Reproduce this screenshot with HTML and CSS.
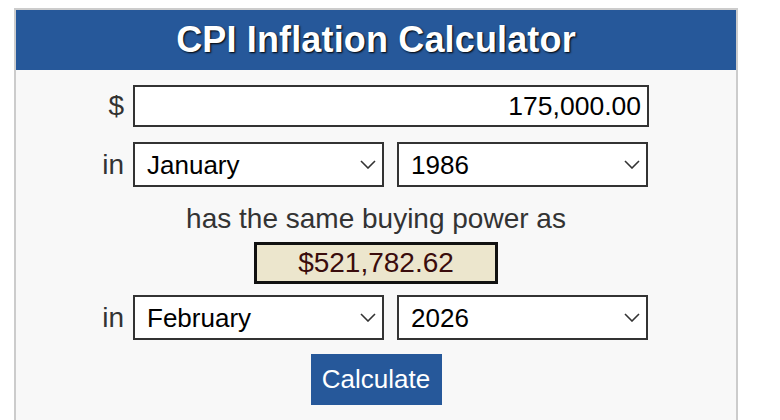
FILE: index.html
```html
<!DOCTYPE html>
<html>
<head>
<meta charset="utf-8">
<link rel="stylesheet" href="styles.css">
</head>
<body>
<div class="calc">
  <div class="header"><h1 class="title">CPI Inflation Calculator</h1></div>
  <div class="form">
    <div class="row row-amount">
      <span class="label">$</span>
      <input class="amount" type="text" value="175,000.00">
    </div>
    <div class="row row-select">
      <span class="label">in</span>
      <div class="pair">
        <div class="sel">
          <select><option>January</option></select>
          <svg class="chev" width="16" height="9" viewBox="0 0 16 9"><path d="M1 1 L8 8 L15 1" fill="none" stroke="#333" stroke-width="1.6"/></svg>
        </div>
        <div class="sel">
          <select><option>1986</option></select>
          <svg class="chev" width="16" height="9" viewBox="0 0 16 9"><path d="M1 1 L8 8 L15 1" fill="none" stroke="#333" stroke-width="1.6"/></svg>
        </div>
      </div>
    </div>
    <div class="same">has the same buying power as</div>
    <div class="result">$521,782.62</div>
    <div class="row row-select row-to">
      <span class="label">in</span>
      <div class="pair">
        <div class="sel">
          <select><option>February</option></select>
          <svg class="chev" width="16" height="9" viewBox="0 0 16 9"><path d="M1 1 L8 8 L15 1" fill="none" stroke="#333" stroke-width="1.6"/></svg>
        </div>
        <div class="sel">
          <select><option>2026</option></select>
          <svg class="chev" width="16" height="9" viewBox="0 0 16 9"><path d="M1 1 L8 8 L15 1" fill="none" stroke="#333" stroke-width="1.6"/></svg>
        </div>
      </div>
    </div>
    <div class="actions"><button class="btn" type="button">Calculate</button></div>
  </div>
</div>
</body>
</html>
```
FILE: styles.css
```css
html, body {
  margin: 0;
  padding: 0;
  background: #fff;
}
body {
  padding: 8px 0 0 14px;
  font-family: "Liberation Sans", Arial, sans-serif;
}
.calc {
  width: 720px;
  border: 2px solid #cccccc;
  border-bottom: none;
  background: #f8f8f8;
  height: 420px;
}
.header {
  background: #26589a;
  height: 60px;
  display: flex;
  align-items: center;
  justify-content: center;
}
.title {
  margin: 0;
  color: #fff;
  font-size: 36px;
  font-weight: bold;
  text-shadow: 1px 1px 2px #000;
  letter-spacing: 0.15px;
}
.form {
  display: flex;
  flex-direction: column;
  align-items: center;
}
.row {
  display: grid;
  grid-template-columns: 24px 516px;
  column-gap: 9px;
  align-items: center;
  margin-left: -3px;
}
.row-amount {
  margin-top: 15px;
}
.row-select {
  margin-top: 15px;
}
.row-to {
  margin-top: 11px;
}
.label {
  text-align: right;
  font-size: 28px;
  color: #333;
}
.amount {
  box-sizing: border-box;
  width: 516px;
  height: 42px;
  border: 2px solid #333;
  background: #fff;
  font-family: "Liberation Sans", Arial, sans-serif;
  font-size: 26.5px;
  color: #000;
  text-align: right;
  padding: 0 6px 0 0;
  margin: 0;
  outline: none;
}
.pair {
  display: flex;
  gap: 13px;
}
.sel {
  position: relative;
  width: 251px;
  height: 45px;
}
.sel select {
  box-sizing: border-box;
  width: 251px;
  height: 45px;
  appearance: none;
  -webkit-appearance: none;
  border: 2px solid #333;
  border-radius: 0;
  background: #fff;
  font-family: "Liberation Sans", Arial, sans-serif;
  font-size: 26px;
  color: #000;
  padding: 0 0 0 12px;
  margin: 0;
}
.chev {
  position: absolute;
  right: 8px;
  top: 18px;
  pointer-events: none;
}
.same {
  margin-top: 16px;
  font-size: 28px;
  color: #333;
  line-height: 32px;
}
.result {
  box-sizing: border-box;
  margin-top: 7px;
  width: 244px;
  height: 42px;
  border: 3px solid #111;
  background: #ece6cd;
  color: #3a0c0c;
  font-size: 28px;
  display: flex;
  align-items: center;
  justify-content: center;
}
.actions {
  margin-top: 14px;
}
.btn {
  width: 131px;
  height: 51px;
  border: none;
  background: #26589a;
  color: #fff;
  font-family: "Liberation Sans", Arial, sans-serif;
  font-size: 26px;
  padding: 0;
  margin: 0;
}
```
